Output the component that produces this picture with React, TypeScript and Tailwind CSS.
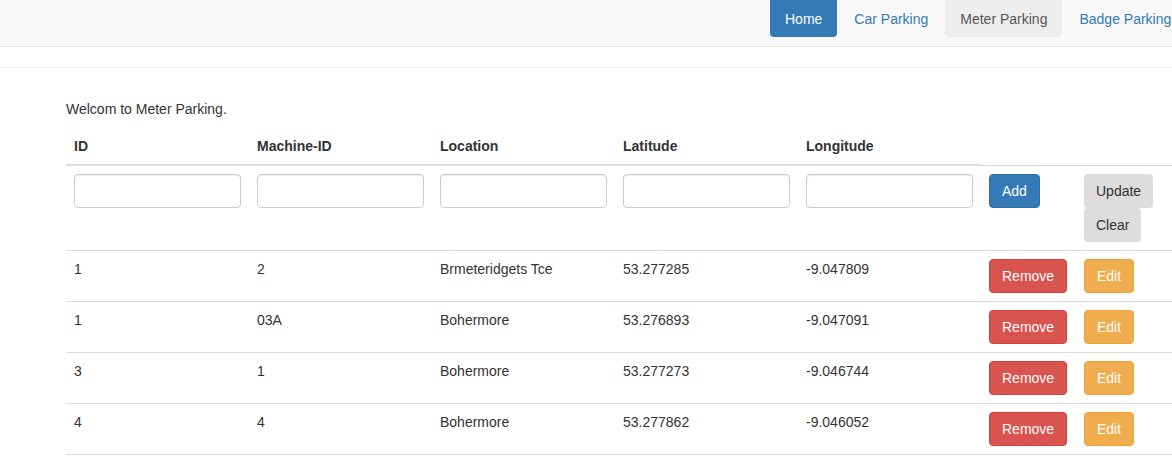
import React from 'react';

const rows = [
  { id: '1', machine: '2', location: 'Brmeteridgets Tce', lat: '53.277285', lng: '-9.047809' },
  { id: '1', machine: '03A', location: 'Bohermore', lat: '53.276893', lng: '-9.047091' },
  { id: '3', machine: '1', location: 'Bohermore', lat: '53.277273', lng: '-9.046744' },
  { id: '4', machine: '4', location: 'Bohermore', lat: '53.277862', lng: '-9.046052' },
];

const navItems = [
  { label: 'Home', cls: 'bg-[#337ab7] text-white' },
  { label: 'Car Parking', cls: 'text-[#337ab7]' },
  { label: 'Meter Parking', cls: 'bg-[#eeeeee] text-[#555]' },
  { label: 'Badge Parking', cls: 'text-[#337ab7]' },
];

const cols = ['ID', 'Machine-ID', 'Location', 'Latitude', 'Longitude'];

export default function App() {
  return (
    <div className="w-[1172px] h-[461px] overflow-hidden bg-white text-[14px] leading-[20px] text-[#333]" style={{ fontFamily: '"Liberation Sans", Arial, sans-serif' }}>
      {/* navbar */}
      <div className="h-[47px] bg-[#f8f8f8] border-b border-[#e7e7e7] flex">
        <div className="ml-[770px] flex gap-[2px] whitespace-nowrap">
          {navItems.map((n) => (
            <div key={n.label} className={`h-[37px] px-[15px] flex items-center rounded-b-[4px] ${n.cls}`}>
              {n.label}
            </div>
          ))}
        </div>
      </div>
      <div className="mt-[20px] border-t border-[#eeeeee]" />

      <div className="pl-[66px] pt-[31px]">
        <p>Welcom to Meter Parking.</p>
        <table className="mt-[9px] w-[1130px] table-fixed border-collapse">
          <colgroup>
            <col className="w-[183px]" />
            <col className="w-[183px]" />
            <col className="w-[183px]" />
            <col className="w-[183px]" />
            <col className="w-[183px]" />
            <col className="w-[95px]" />
            <col className="w-[120px]" />
          </colgroup>
          <thead>
            <tr>
              {cols.map((c) => (
                <th key={c} className="text-left font-bold px-[8px] pt-[8px] pb-[8px] border-b-2 border-[#dddddd]">{c}</th>
              ))}
            </tr>
          </thead>
          <tbody>
            <tr className="border-t border-[#dddddd]">
              {cols.map((c) => (
                <td key={c} className="p-[8px] align-top">
                  <input className="w-full h-[34px] border border-[#cccccc] rounded-[4px] px-[12px] shadow-[inset_0_1px_1px_rgba(0,0,0,0.075)] outline-none" />
                </td>
              ))}
              <td className="p-[8px] align-top">
                <button className="h-[34px] px-[12px] rounded-[4px] bg-[#337ab7] border border-[#2e6da4] text-white">Add</button>
              </td>
              <td className="p-[8px] align-top">
                <div className="flex flex-col items-start">
                  <button className="h-[34px] px-[12px] rounded-[4px] bg-[#dddddd] text-[#333]">Update</button>
                  <button className="h-[34px] px-[12px] rounded-[4px] bg-[#dddddd] text-[#333]">Clear</button>
                </div>
              </td>
            </tr>
            {rows.map((r, i) => (
              <tr key={i} className="border-t border-b border-[#dddddd]">
                <td className="p-[8px] align-top">{r.id}</td>
                <td className="p-[8px] align-top">{r.machine}</td>
                <td className="p-[8px] align-top">{r.location}</td>
                <td className="p-[8px] align-top">{r.lat}</td>
                <td className="p-[8px] align-top">{r.lng}</td>
                <td className="p-[8px] align-top">
                  <button className="h-[34px] px-[12px] rounded-[4px] bg-[#d9534f] border border-[#d43f3a] text-white">Remove</button>
                </td>
                <td className="p-[8px] align-top">
                  <button className="h-[34px] px-[12px] rounded-[4px] bg-[#f0ad4e] border border-[#eea236] text-white">Edit</button>
                </td>
              </tr>
            ))}
          </tbody>
        </table>
      </div>
    </div>
  );
}
